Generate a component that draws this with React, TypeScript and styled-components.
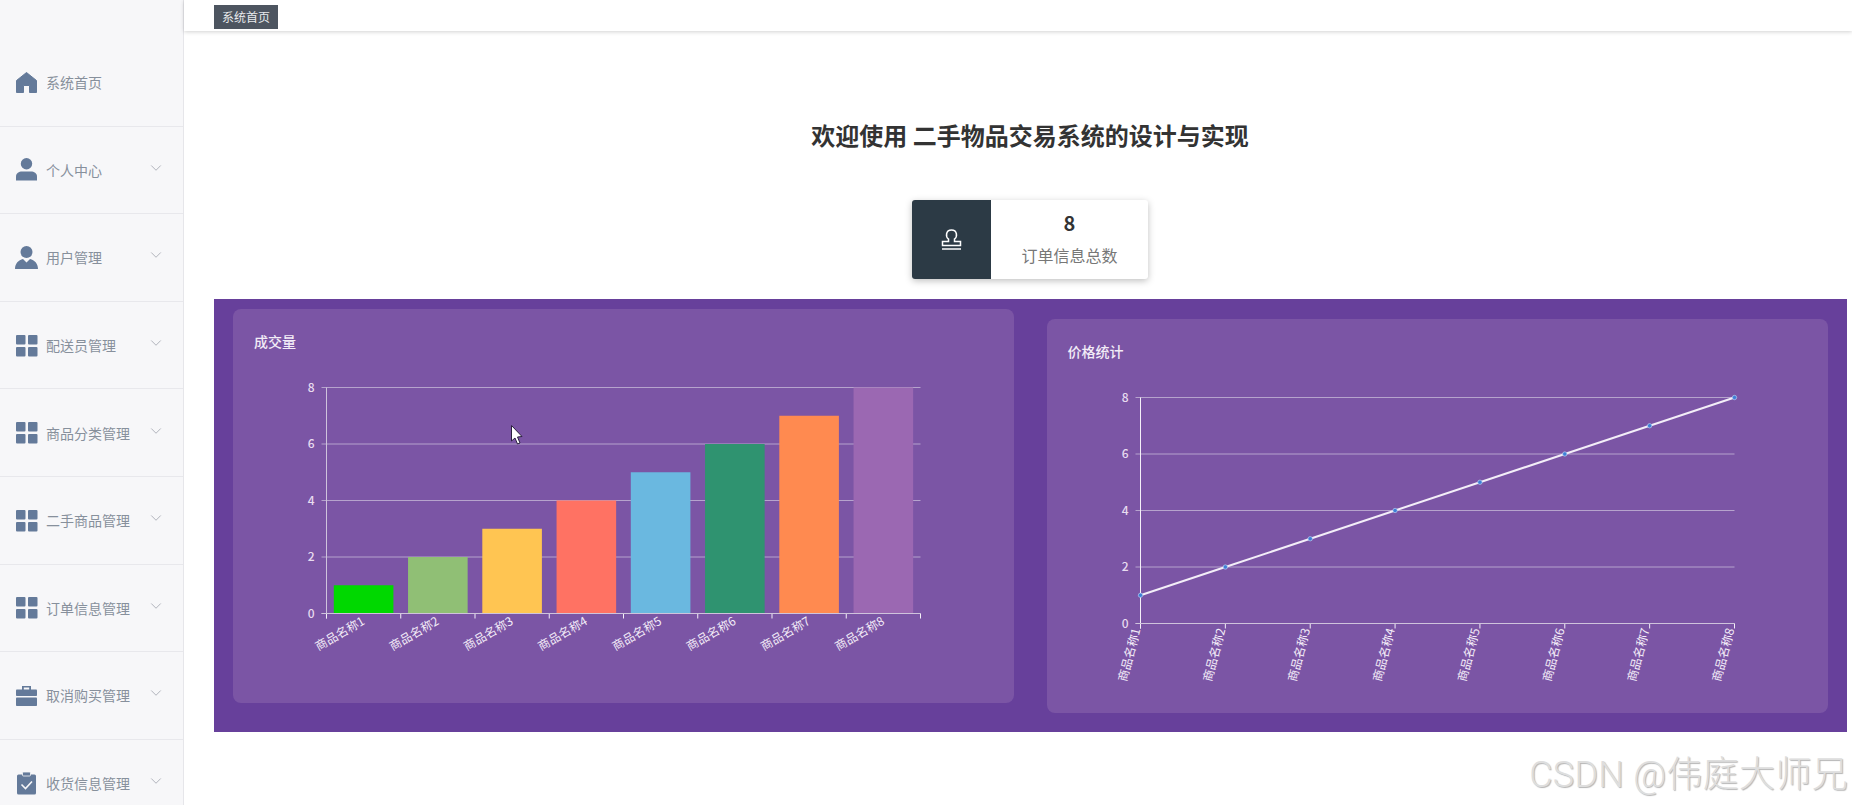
import styled, { createGlobalStyle } from "styled-components";
import { ChevronDown } from "lucide-react";
import type { ReactNode } from "react";

const FONT = `"Noto Sans CJK SC", "Liberation Sans", sans-serif`;

const GlobalStyle = createGlobalStyle`
  html, body {
    margin: 0;
    padding: 0;
    height: 100%;
    background: #fff;
    overflow: hidden;
    font-family: ${FONT};
  }
  #root { height: 100%; }
`;

type IconKind = "home" | "user" | "tie" | "grid" | "case" | "clip";

const menu: { label: string; icon: IconKind; arrow?: boolean }[] = [
  { label: "系统首页", icon: "home" },
  { label: "个人中心", icon: "user", arrow: true },
  { label: "用户管理", icon: "tie", arrow: true },
  { label: "配送员管理", icon: "grid", arrow: true },
  { label: "商品分类管理", icon: "grid", arrow: true },
  { label: "二手商品管理", icon: "grid", arrow: true },
  { label: "订单信息管理", icon: "grid", arrow: true },
  { label: "取消购买管理", icon: "case", arrow: true },
  { label: "收货信息管理", icon: "clip", arrow: true },
];

const barColors = ["#00d800", "#90bf75", "#ffc552", "#ff7263", "#6ab8e0", "#2f9370", "#ff8a50", "#9b68b2"];
const values = [1, 2, 3, 4, 5, 6, 7, 8];
const yTicks = [0, 2, 4, 6, 8];

const X0 = 72.5;
const X1 = 666.5;
const TOP = 36.5;
const ZERO = 262.5;
const yFor = (v: number) => ZERO - (v / 8) * (ZERO - TOP);

const MenuIcon = ({ kind }: { kind: IconKind }) => {
  const fill = "#647a9a";
  if (kind === "home")
    return (
      <IconSvg viewBox="0 0 21 21">
        <path
          d="M10.5 0.5 L20.5 8.5 V20.5 H13.5 V13.5 H7.5 V20.5 H0.5 V8.5 Z"
          fill={fill}
          stroke={fill}
          strokeLinejoin="round"
        />
      </IconSvg>
    );
  if (kind === "user")
    return (
      <IconSvg viewBox="0 0 21 23">
        <circle cx="10.5" cy="5.7" r="5.7" fill={fill} />
        <path d="M0 22.5 V18.5 C0 15 3 13.5 6 13.5 H15 C18 13.5 21 15 21 18.5 V22.5 Z" fill={fill} />
      </IconSvg>
    );
  if (kind === "tie")
    return (
      <IconSvg viewBox="0 0 21 23">
        <circle cx="10.5" cy="6" r="6" fill={fill} />
        <path d="M-1 23 C-1 17.5 2.5 14 7 13 L10.5 16.5 L14 13 C18.5 14 22 17.5 22 23 Z" fill={fill} />
      </IconSvg>
    );
  if (kind === "grid")
    return (
      <IconSvg viewBox="0 0 21 21">
        <rect x="0" y="0" width="9.5" height="9.5" rx="1" fill={fill} />
        <rect x="12" y="0" width="9.5" height="9.5" rx="1" fill={fill} />
        <rect x="0" y="12" width="9.5" height="9.5" rx="1" fill={fill} />
        <rect x="12" y="12" width="9.5" height="9.5" rx="1" fill={fill} />
      </IconSvg>
    );
  if (kind === "case")
    return (
      <IconSvg viewBox="0 0 21 21">
        <path d="M6 5 V1 H15 V5 H13.2 V2.6 H7.8 V5 Z" fill={fill} />
        <rect x="0" y="4.5" width="21" height="6.5" rx="0.8" fill={fill} />
        <rect x="0" y="12.5" width="21" height="8.5" rx="0.8" fill={fill} />
      </IconSvg>
    );
  return (
    <IconSvg viewBox="0 0 21 23">
      <rect x="1" y="2.5" width="19" height="20" rx="1.5" fill={fill} />
      <rect x="6.5" y="0" width="8" height="4" rx="1" fill={fill} stroke="#f7f7f9" strokeWidth="0.8" />
      <path d="M5.5 12.5 L9.5 16.5 L16 9.5" fill="none" stroke="#f7f7f9" strokeWidth="1.6" />
    </IconSvg>
  );
};

const Axes = ({ xTicks, bright, children }: { xTicks: number[]; bright?: boolean; children: ReactNode }) => (
  <>
    {yTicks.map((v) => (
      <g key={v}>
        <GridLine x1={X0 - 5} x2={X1} y1={yFor(v)} y2={yFor(v)} />
        <AxisNumber x={X0 - 12} y={yFor(v) + 4}>
          {v}
        </AxisNumber>
      </g>
    ))}
    <AxisLine $bright={bright} x1={X0} x2={X0} y1={TOP} y2={ZERO + 5} />
    {xTicks.map((x) => (
      <AxisLine key={x} $bright x1={x} x2={x} y1={ZERO} y2={ZERO + 5} />
    ))}
    {children}
  </>
);

const BarChart = () => {
  const band = (X1 - X0) / 8;
  const ticks = Array.from({ length: 9 }, (_, i) => X0 + band * i);
  return (
    <ChartSvg viewBox="0 0 739 351">
      <Axes xTicks={ticks}>
        {values.map((v, i) => (
          <rect
            key={v}
            x={X0 + band * i + 7.3}
            y={yFor(v)}
            width={59.6}
            height={ZERO - yFor(v)}
            fill={barColors[i]}
          />
        ))}
        <BaseLine x1={X0 - 5} x2={X1} y1={ZERO} y2={ZERO} />
        {values.map((v, i) => {
          const cx = X0 + band * (i + 0.5) - 1;
          return (
            <CategoryLabel key={v} x={cx} y={ZERO + 11} transform={`rotate(-30 ${cx} ${ZERO + 5})`}>
              商品名称{v}
            </CategoryLabel>
          );
        })}
        <path
          d="M257.5 74.5 V90 L261 87 L263.5 93 L266 92 L263.5 86 L268 85.5 Z"
          fill="#fff"
          stroke="#2b2140"
          strokeWidth="1"
        />
      </Axes>
    </ChartSvg>
  );
};

const LineChart = () => {
  const step = (X1 - X0) / 7;
  const points = values.map((v, i) => ({ x: X0 + step * i, y: yFor(v) }));
  return (
    <ChartSvg viewBox="0 0 739 351">
      <Axes xTicks={points.map((p) => p.x)} bright>
        <BaseLine x1={X0 - 5} x2={X1} y1={ZERO} y2={ZERO} />
        <TrendLine points={points.map((p) => `${p.x},${p.y}`).join(" ")} />
        {points.map((p) => (
          <circle key={p.x} cx={p.x} cy={p.y} r="2.2" fill="#3f80d8" stroke="#c9dcf5" strokeWidth="0.6" />
        ))}
        {points.map((p, i) => (
          <CategoryLabel
            key={p.x}
            x={p.x}
            y={ZERO + 6}
            transform={`rotate(-75 ${p.x} ${ZERO + 6})`}
          >
            商品名称{values[i]}
          </CategoryLabel>
        ))}
      </Axes>
    </ChartSvg>
  );
};

export default function App() {
  return (
    <Page>
      <GlobalStyle />
      <Sidebar>
        {menu.map((item) => (
          <MenuItem key={item.label}>
            <MenuIcon kind={item.icon} />
            <MenuLabel>{item.label}</MenuLabel>
            {item.arrow && (
              <Arrow>
                <ChevronDown size={18} strokeWidth={1.2} />
              </Arrow>
            )}
          </MenuItem>
        ))}
      </Sidebar>
      <Main>
        <TopBar>
          <Tag>系统首页</Tag>
        </TopBar>
        <Heading>欢迎使用 二手物品交易系统的设计与实现</Heading>
        <StatCard>
          <StatIcon>
            <svg width="21" height="22" viewBox="0 0 21 22" fill="none" stroke="#fff" strokeWidth="1.5">
              <path d="M7.5 12.5 V10 C4.5 8 4.5 1 10.5 1 C16.5 1 16.5 8 13.5 10 V12.5 H19.5 V16.5 H1.5 V12.5 Z" />
              <path d="M1 20 H20" />
            </svg>
          </StatIcon>
          <StatBody>
            <StatValue>8</StatValue>
            <StatLabel>订单信息总数</StatLabel>
          </StatBody>
        </StatCard>
        <ChartPanel>
          <ChartCard>
            <ChartTitle>成交量</ChartTitle>
            <BarChart />
          </ChartCard>
          <ChartCard $lower>
            <ChartTitle>价格统计</ChartTitle>
            <LineChart />
          </ChartCard>
        </ChartPanel>
      </Main>
      <Watermark>CSDN @伟庭大师兄</Watermark>
    </Page>
  );
}

const Page = styled.div`
  position: relative;
  display: flex;
  height: 805px;
  overflow: hidden;
`;

const Sidebar = styled.aside`
  width: 183px;
  flex-shrink: 0;
  padding-top: 39px;
  background: #f7f7f9;
  border-right: 1px solid #e6e6ea;
  box-sizing: content-box;
`;

const MenuItem = styled.div`
  display: flex;
  align-items: center;
  box-sizing: border-box;
  height: 87.6px;
  padding: 0 18px 0 16px;
  gap: 9px;
  border-bottom: 1px solid #e8e8ec;
`;

const IconSvg = styled.svg`
  width: 21px;
  height: 23px;
  flex-shrink: 0;
  overflow: visible;
`;

const MenuLabel = styled.span`
  font-size: 14px;
  color: #87909c;
  white-space: nowrap;
`;

const Arrow = styled.span`
  display: flex;
  margin-left: auto;
  margin-bottom: 4px;
  color: #a9adb5;
`;

const Main = styled.main`
  flex: 1;
  min-width: 0;
  display: flex;
  flex-direction: column;
`;

const TopBar = styled.header`
  height: 31px;
  flex-shrink: 0;
  box-sizing: border-box;
  padding: 3px 0 0 30px;
  background: #fff;
  box-shadow: 0 1px 4px rgba(0, 0, 0, 0.18);
`;

const Tag = styled.span`
  display: inline-block;
  height: 24px;
  line-height: 24px;
  padding: 0 8px;
  font-size: 12px;
  color: #e8eaec;
  background: #4d5560;
`;

const Heading = styled.h1`
  margin: 88px 0 49px;
  padding-left: 24px;
  font-size: 24px;
  line-height: 32px;
  font-weight: 700;
  color: #333;
  text-align: center;
`;

const StatCard = styled.section`
  align-self: center;
  display: flex;
  width: 236px;
  height: 79px;
  margin-left: 24px;
  border-radius: 3px;
  background: #fff;
  box-shadow: 0 2px 7px rgba(0, 0, 0, 0.25);
  overflow: hidden;
`;

const StatIcon = styled.div`
  width: 79px;
  display: flex;
  align-items: center;
  justify-content: center;
  background: #2c3a45;
`;

const StatBody = styled.div`
  flex: 1;
  display: flex;
  flex-direction: column;
  align-items: center;
  padding-top: 9px;
  gap: 6px;
`;

const StatValue = styled.div`
  font-size: 20px;
  line-height: 28px;
  font-weight: 700;
  color: #333;
`;

const StatLabel = styled.div`
  font-size: 16px;
  line-height: 24px;
  color: #777;
`;

const ChartPanel = styled.section`
  display: flex;
  align-items: flex-start;
  gap: 32.5px;
  height: 433px;
  box-sizing: border-box;
  margin: 20px 5px 0 30px;
  padding: 10px 20px 0 19px;
  background: #67409b;
`;

const ChartCard = styled.div<{ $lower?: boolean }>`
  flex: 1;
  height: 394px;
  box-sizing: border-box;
  margin-top: ${(p) => (p.$lower ? "10px" : "0")};
  padding: 22px 21px 0;
  border-radius: 8px;
  background: #7b55a5;
`;

const ChartTitle = styled.div`
  font-size: 14px;
  line-height: 20px;
  font-weight: 500;
  color: #f2ecf7;
`;

const ChartSvg = styled.svg`
  display: block;
  width: 739px;
  height: 351px;
`;

const GridLine = styled.line`
  stroke: #b6a3cd;
  stroke-width: 1;
`;

const AxisLine = styled.line<{ $bright?: boolean }>`
  stroke: ${(p) => (p.$bright ? "#f4f0f8" : "#cfc3dc")};
  stroke-width: 1;
`;

const BaseLine = styled.line`
  stroke: #cfc3dc;
  stroke-width: 1.2;
`;

const AxisNumber = styled.text`
  font-family: ${FONT};
  font-size: 12px;
  font-weight: 500;
  fill: #e8dcf0;
  text-anchor: end;
`;

const CategoryLabel = styled.text`
  font-family: ${FONT};
  font-size: 12px;
  fill: #f3ecf8;
  text-anchor: end;
`;

const TrendLine = styled.polyline`
  fill: none;
  stroke: #f3eef8;
  stroke-width: 2;
`;

const Watermark = styled.div`
  position: absolute;
  right: 4px;
  bottom: 8px;
  font-size: 36px;
  line-height: 44px;
  letter-spacing: 0.3px;
  font-weight: 300;
  font-family: Roboto, "Noto Sans CJK SC", sans-serif;
  color: #dedede;
  text-shadow: 1px 1px 1px #b5b5b5;
  white-space: nowrap;
`;
